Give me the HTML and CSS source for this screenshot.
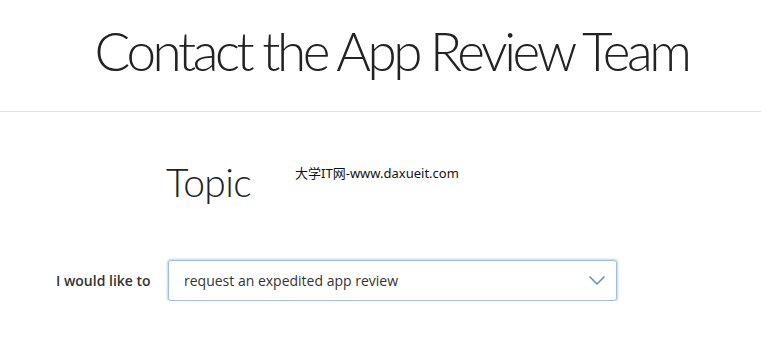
FILE: index.html
```html
<!DOCTYPE html>
<html lang="en">
<head>
    <meta charset="UTF-8">
    <meta name="viewport" content="width=device-width, initial-scale=1.0">
    <title>Contact the App Review Team</title>
    <link rel="stylesheet" href="styles.css">
</head>
<body>

    <!-- Page header -->
    <div class="header">
        <h1>Contact the App Review Team</h1>
    </div>

    <!-- Topic form -->
    <div class="content">
        <div class="topic-row">
            <h2>Topic</h2>
            <span class="watermark">大学IT网-www.daxueit.com</span>
        </div>

        <div class="form-row">
            <label for="topic">I would like to</label>
            <div class="select">
                <span>request an expedited app review</span>
                <svg width="18" height="11" viewBox="0 0 18 11">
                    <path d="M1.5 1.5 L9 9 L16.5 1.5" fill="none" stroke="#5a8fc4" stroke-width="1.5"/>
                </svg>
            </div>
        </div>
    </div>

</body>
</html>
```

FILE: styles.css
```css
/* Basic styles */
body {
    font-family: 'Open Sans', 'Noto Sans', sans-serif;
    background-color: #ffffff;
    color: #333;
    margin: 0;
    padding: 0;
}

/* Header */
.header {
    height: 111px;
    border-bottom: 1px solid #e3e3e3;
    display: flex;
    justify-content: center;
    padding-left: 22px;
}

.header h1 {
    margin: 21px 0 0;
    font-family: 'Lato', sans-serif;
    font-weight: 300;
    font-size: 53px;
    line-height: 60px;
    color: #222;
    letter-spacing: -3.4px;
}

/* Content */
.content {
    padding: 0 0 0 56px;
}

.topic-row {
    display: flex;
    align-items: flex-start;
    padding-left: 110px;
    margin-top: 47px;
}

.topic-row h2 {
    margin: 0;
    font-family: 'Lato', sans-serif;
    font-weight: 300;
    font-size: 39px;
    line-height: 46px;
    color: #222;
    letter-spacing: -0.6px;
}

.watermark {
    margin: 4px 0 0 44px;
    font-family: 'Noto Sans', 'Noto Sans CJK SC', sans-serif;
    font-size: 13px;
    color: #111;
}

.form-row {
    display: flex;
    align-items: center;
    margin-top: 55px;
}

.form-row label {
    width: 112px;
    font-size: 14px;
    font-weight: 600;
    color: #333;
}

.select {
    box-sizing: border-box;
    width: 449px;
    height: 41px;
    border: 1px solid #9fbde0;
    border-radius: 3px;
    box-shadow: 0 0 2px 1px rgba(120, 160, 215, 0.45);
    display: flex;
    align-items: center;
    justify-content: space-between;
    padding: 0 10px 0 15px;
}

.select span {
    font-size: 14px;
    color: #333;
}
```
